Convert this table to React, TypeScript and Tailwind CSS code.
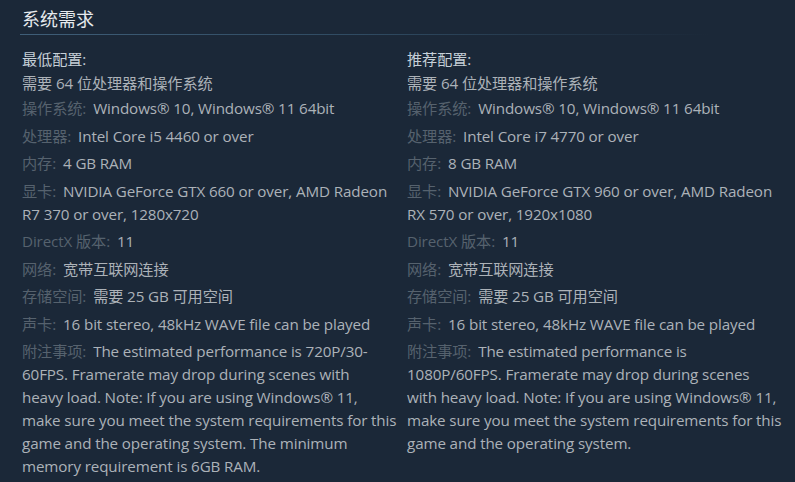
const font = { fontFamily: '"Open Sans", "Noto Sans CJK SC", sans-serif' };

type Row = { label: string; value: string };

const minRows: Row[] = [
  { label: "操作系统:", value: "Windows® 10, Windows® 11 64bit" },
  { label: "处理器:", value: "Intel Core i5 4460 or over" },
  { label: "内存:", value: "4 GB RAM" },
  { label: "显卡:", value: "NVIDIA GeForce GTX 660 or over, AMD Radeon R7 370 or over, 1280x720" },
  { label: "DirectX 版本:", value: "11" },
  { label: "网络:", value: "宽带互联网连接" },
  { label: "存储空间:", value: "需要 25 GB 可用空间" },
  { label: "声卡:", value: "16 bit stereo, 48kHz WAVE file can be played" },
  {
    label: "附注事项:",
    // nbsp keeps "heavy load." together so the wrap matches the shot
    value:
      "The estimated performance is 720P/30-60FPS. Framerate may drop during scenes with heavy\u00a0load. Note: If you are using Windows® 11, make sure you meet the system requirements for this game and the operating system. The minimum memory requirement is 6GB RAM.",
  },
];

const recRows: Row[] = [
  { label: "操作系统:", value: "Windows® 10, Windows® 11 64bit" },
  { label: "处理器:", value: "Intel Core i7 4770 or over" },
  { label: "内存:", value: "8 GB RAM" },
  { label: "显卡:", value: "NVIDIA GeForce GTX 960 or over, AMD Radeon RX 570 or over, 1920x1080" },
  { label: "DirectX 版本:", value: "11" },
  { label: "网络:", value: "宽带互联网连接" },
  { label: "存储空间:", value: "需要 25 GB 可用空间" },
  { label: "声卡:", value: "16 bit stereo, 48kHz WAVE file can be played" },
  {
    label: "附注事项:",
    value:
      "The estimated performance is 1080P/60FPS. Framerate may drop during scenes with heavy load. Note: If you are using Windows® 11, make sure you meet the system requirements for this game and the operating system.",
  },
];

function Column({ title, rows }: { title: string; rows: Row[] }) {
  return (
    <div className="w-[376px] text-[15.2px] leading-[23px] tracking-[-0.12px]">
      <div className="text-[#c6d0d8] mb-[1px]">{title}</div>
      <div className="text-[#acb2b8] mb-[2px]">需要 64 位处理器和操作系统</div>
      <ul>
        {rows.map((r) => (
          <li key={r.label} className="text-[#acb2b8] mb-[4.5px]">
            <span className="text-[#56626e] mr-[7px]">{r.label}</span>
            {r.value}
          </li>
        ))}
      </ul>
    </div>
  );
}

export default function App() {
  return (
    <div className="w-[795px] h-[482px] overflow-hidden bg-[#1b2838]" style={font}>
      <div className="pl-[22px] pt-[6px]">
        <h2 className="text-[18px] leading-[26px] text-[#e6eaee] font-normal">系统需求</h2>
        <div className="mt-[2px] -ml-[2px] w-[690px] h-[1px] bg-gradient-to-r from-[#3f5e78] via-[#2f4a61] to-transparent" />
      </div>
      <div className="flex justify-between pl-[22px] pr-[12px] pt-[13px]">
        <Column title="最低配置:" rows={minRows} />
        <Column title="推荐配置:" rows={recRows} />
      </div>
    </div>
  );
}
